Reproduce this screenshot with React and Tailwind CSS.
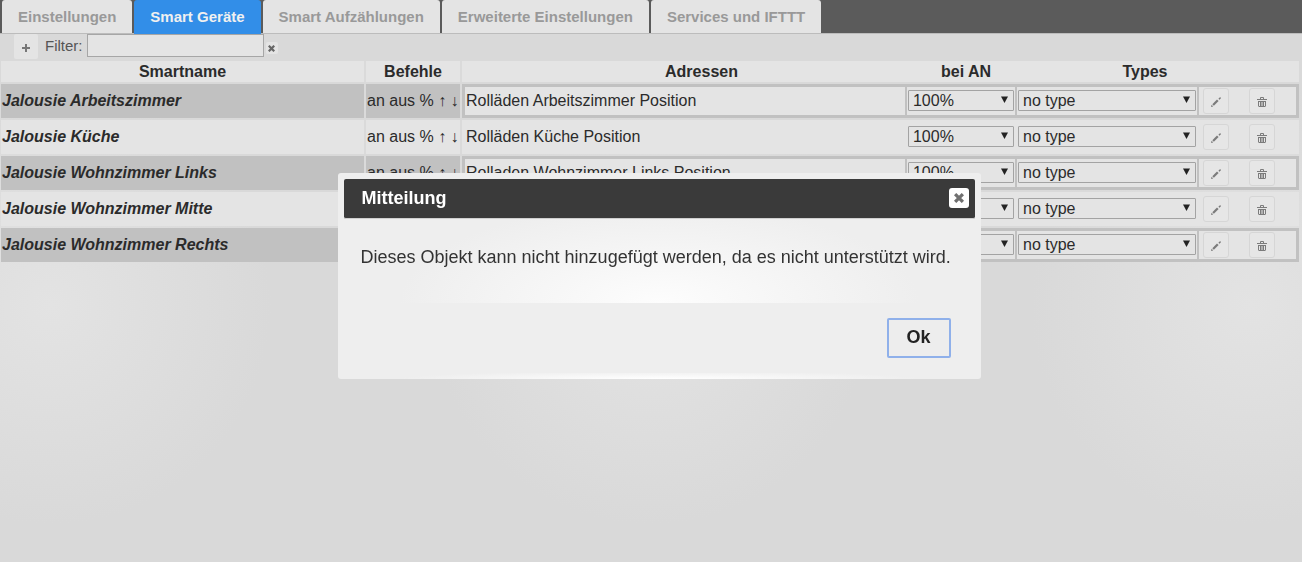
import { useState } from "react";

const TABS = [
  "Einstellungen",
  "Smart Geräte",
  "Smart Aufzählungen",
  "Erweiterte Einstellungen",
  "Services und IFTTT",
];

const DEVICES = [
  { id: 1, name: "Jalousie Arbeitszimmer", address: "Rolläden Arbeitszimmer Position" },
  { id: 2, name: "Jalousie Küche", address: "Rolläden Küche Position" },
  { id: 3, name: "Jalousie Wohnzimmer Links", address: "Rolladen Wohnzimmer Links Position" },
  { id: 4, name: "Jalousie Wohnzimmer Mitte", address: "Rolladen Wohnzimmer Mitte Position" },
  { id: 5, name: "Jalousie Wohnzimmer Rechts", address: "Rolladen Wohnzimmer Rechts Position" },
];

const CrossIcon = ({ className }) => (
  <svg className={className} viewBox="0 0 8 8" fill="none" stroke="currentColor" strokeWidth="2.6">
    <path d="M0.9 0.9 7.1 7.1M7.1 0.9 0.9 7.1" />
  </svg>
);

const PencilIcon = () => (
  <svg className="size-4" viewBox="0 0 16 16" fill="currentColor">
    <path d="M3 13l0.6-2.2 1.6 1.6z" />
    <path d="M4.3 10.2 9 5.5l1.6 1.6-4.7 4.7z" />
    <path d="M10.4 4.7 11.6 3.5q.5-.4 1 0l.1.1q.5.5 0 1L11.5 5.8z" />
  </svg>
);

const TrashIcon = () => (
  <svg className="size-4" viewBox="0 0 16 16" fill="none" stroke="currentColor">
    <path d="M3 5.5h10M6.5 5V3.5h3V5" />
    <path d="M4.5 7v5q0 .5.5.5h6q.5 0 .5-.5V7M4 7.5h8M6.5 7v5M8 7v5M9.5 7v5" />
  </svg>
);

const SelectBox = ({ label, options }) => (
  <div className="relative mb-0.5">
    <select
      aria-label={label}
      className="block h-[21px] w-full appearance-none rounded-[1px] border border-[#a3a3a3] bg-[#e4e4e4] pl-1 text-base leading-[19px]"
    >
      {options.map((option) => (
        <option key={option}>{option}</option>
      ))}
    </select>
    <svg
      className="pointer-events-none absolute top-1.5 right-1.5 h-[7px] w-[7px]"
      viewBox="0 0 7 7"
      fill="#222"
    >
      <path d="M0 0.5h7L3.5 7z" />
    </svg>
  </div>
);

const IconButton = ({ label, children }) => (
  <button
    type="button"
    aria-label={label}
    className="flex size-[26px] items-center justify-center rounded-[3px] border border-[#d6d6d6] bg-[#e6e6e6] pt-px text-[#7b7b7b]"
  >
    {children}
  </button>
);

const DeviceRow = ({ device, odd }) => {
  const nameBg = odd ? "bg-[#c1c1c1]" : "bg-[#e4e4e4]";
  const frame = odd ? "border-[#c1c1c1]" : "border-[#e4e4e4]";

  return (
    <tr className="h-[34px]">
      <td className={`border-r-2 border-[#dadada] pl-px font-bold italic ${nameBg}`}>
        {device.name}
      </td>
      <td className={`border-r-2 border-[#dadada] pl-px ${nameBg}`}>an aus % ↑ ↓</td>
      <td className={`border-y-[3px] border-l-[3px] bg-[#e4e4e4] pl-px ${frame}`}>
        {device.address}
      </td>
      <td colSpan={3} className={`border-y-[3px] border-l-2 bg-[#e4e4e4] px-px ${frame}`}>
        <SelectBox label={`bei AN ${device.name}`} options={["100%", "75%", "50%", "25%"]} />
      </td>
      <td className={`border-y-[3px] border-l-2 bg-[#e4e4e4] px-px ${frame}`}>
        <SelectBox label={`Typ ${device.name}`} options={["no type", "Light", "Switch"]} />
      </td>
      <td className={`border-3 border-l-2 bg-[#e4e4e4] pl-1 ${frame}`}>
        <div className="flex gap-5">
          <IconButton label={`${device.name} bearbeiten`}>
            <PencilIcon />
          </IconButton>
          <IconButton label={`${device.name} löschen`}>
            <TrashIcon />
          </IconButton>
        </div>
      </td>
    </tr>
  );
};

const MessageDialog = ({ onClose }) => (
  <div className="fixed inset-0 flex items-center justify-center pb-2.5 pl-4">
    <div
      role="dialog"
      aria-labelledby="dialog-title"
      className="w-full max-w-[643px] rounded-[3px] bg-[#eeeeee] bg-[radial-gradient(260px_8px_at_50%_100%,#ffffff,#eeeeee)] p-1.5 text-lg text-[#333]"
    >
      <div className="flex h-10 items-center justify-between rounded-[2px] border-b border-[#cfcfcf] bg-[#3a3a3a] pr-1.5 pb-px pl-[18px]">
        <h2 id="dialog-title" className="font-bold text-white">
          Mitteilung
        </h2>
        <button
          type="button"
          aria-label="Schließen"
          onClick={onClose}
          className="flex size-5 items-center justify-center rounded-[3px] bg-white text-[#707070]"
        >
          <CrossIcon className="size-2.5" />
        </button>
      </div>
      <p className="bg-[radial-gradient(260px_100px_at_50%_100%,#fdfdfd,#eeeeee)] px-[17px] pt-6 pb-8">
        Dieses Objekt kann nicht hinzugefügt werden, da es nicht unterstützt wird.
      </p>
      <div className="flex justify-end bg-[#eeeeee] pt-[15px] pr-6 pb-[15px]">
        <button
          type="button"
          onClick={onClose}
          className="h-10 w-16 rounded-[2px] border-2 border-[#8fb0ea] bg-[#ededed] pb-0.5 font-bold text-[#222]"
        >
          Ok
        </button>
      </div>
    </div>
  </div>
);

const App = () => {
  const [activeTab, setActiveTab] = useState("Smart Geräte");
  const [filter, setFilter] = useState("");
  const [showMessage, setShowMessage] = useState(true);

  const query = filter.toLowerCase();
  const devices = DEVICES.filter((device) => device.name.toLowerCase().includes(query));

  return (
    <div className="min-h-screen bg-[#d9d9d9] bg-[radial-gradient(circle_at_300px_305px,#e3e3e3,#d9d9d9_220px)] bg-[length:600px_600px] bg-top bg-repeat-x font-['Liberation_Sans',Arial,sans-serif] text-base text-[#2b2b2b]">
      <nav className="flex h-[34px] items-start gap-0.5 border-b border-[#bcbcbc] bg-[#5b5b5b] pl-0.5">
        {TABS.map((tab) => (
          <button
            key={tab}
            type="button"
            onClick={() => setActiveTab(tab)}
            className={`rounded-t-[3px] px-4 pt-px text-[15px] font-bold ${
              tab === activeTab
                ? "h-[34px] bg-[#328ee8] text-[#f0f0f0]"
                : "h-[33px] bg-[#e4e4e4] text-[#999]"
            }`}
          >
            {tab}
          </button>
        ))}
      </nav>

      <div className="flex h-[25px] items-start pl-3.5 text-[15px]">
        <button
          type="button"
          aria-label="Hinzufügen"
          className="mr-[7px] flex h-[25px] w-6 items-center justify-center rounded-[2px] bg-[#e4e4e4] pt-[3px] text-[#777]"
        >
          <svg className="size-2" viewBox="0 0 8 8" fill="currentColor">
            <path d="M3 0h2v3h3v2H5v3H3V5H0V3h3z" />
          </svg>
        </button>
        <label htmlFor="filter" className="mr-1 leading-6 text-[#555]">
          Filter:
        </label>
        <input
          id="filter"
          type="text"
          value={filter}
          onChange={(e) => setFilter(e.target.value)}
          className="h-[23px] w-[177px] border border-[#a6a6a6] bg-[#e4e4e4] px-1"
        />
        <button
          type="button"
          aria-label="Filter löschen"
          onClick={() => setFilter("")}
          className="mt-2 ml-0.5 flex size-3 items-center justify-center rounded-[2px] bg-[#e4e4e4] text-[#666]"
        >
          <CrossIcon className="size-[7px]" />
        </button>
      </div>

      <div className="pr-[3px] pl-px">
        <table className="w-full table-fixed border-separate border-spacing-x-0 border-spacing-y-0.5">
          <colgroup>
            <col className="w-[365px]" />
            <col className="w-24" />
            <col />
            <col className="w-9" />
            <col className="w-[50px]" />
            <col className="w-6" />
            <col className="w-[182px]" />
            <col className="w-[102px]" />
          </colgroup>
          <thead>
            <tr className="h-[21px] bg-[#e4e4e4] leading-5">
              <th className="border-r-2 border-[#dadada]">Smartname</th>
              <th className="border-r-2 border-[#dadada]">Befehle</th>
              <th colSpan={2}>Adressen</th>
              <th className="whitespace-nowrap">bei AN</th>
              <th colSpan={3}>Types</th>
            </tr>
          </thead>
          <tbody>
            {devices.map((device, index) => (
              <DeviceRow key={device.id} device={device} odd={index % 2 === 0} />
            ))}
          </tbody>
        </table>
      </div>

      {showMessage && <MessageDialog onClose={() => setShowMessage(false)} />}
    </div>
  );
};

export default App;
